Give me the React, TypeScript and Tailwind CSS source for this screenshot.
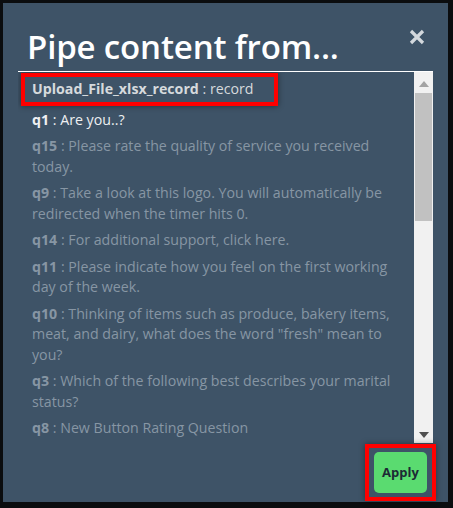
import React from "react";

const items: { k: string; v: string; bright?: boolean }[] = [
  { k: "q1", v: "Are you..?", bright: true },
  { k: "q15", v: "Please rate the quality of service you received today." },
  { k: "q9", v: "Take a look at this logo. You will automatically be redirected when the timer hits 0." },
  { k: "q14", v: "For additional support, click here." },
  { k: "q11", v: "Please indicate how you feel on the first working day of the week." },
  { k: "q10", v: 'Thinking of items such as produce, bakery items, meat, and dairy, what does the word "fresh" mean to you?' },
  { k: "q3", v: "Which of the following best describes your marital status?" },
  { k: "q8", v: "New Button Rating Question" },
];

export default function App() {
  return (
    <div
      className="w-[453px] h-[508px] bg-[#0b0d0f] pt-[3px] pl-[3px] overflow-hidden"
      style={{ fontFamily: '"Open Sans", "Noto Sans", sans-serif' }}
    >
      <div className="relative w-[445px] h-[499px] bg-[#3e5367] flex flex-col">
        <div className="flex items-start justify-between pl-[24px] pr-[22px] pt-[22px] h-[68px]">
          <h1 className="text-[33px] leading-[44px] font-semibold text-white tracking-[-0.15px]">
            Pipe content from...
          </h1>
          <svg width="18" height="18" viewBox="0 0 18 18" className="mt-[3px]">
            <path d="M3 3 L15 15 M15 3 L3 15" stroke="#d3d8dd" strokeWidth="3.2" strokeLinecap="butt" />
          </svg>
        </div>
        <div className="ml-[15px] w-[415px] h-[372px] border-t border-white flex">
          <div className="flex-1 overflow-hidden text-[14.2px] leading-[20.5px]">
            <div className="ml-[3px] mt-[1px] w-[257px] border-4 border-[#ff0000] px-[7px] py-[2px] shadow-[0_0_6px_rgba(0,0,0,0.45)]">
              <span className="font-bold text-[#d6dadd]">Upload_File_xlsx_record</span>
              <span className="text-[#d6dadd]"> : record</span>
            </div>
            <div className="pl-[14px] pr-[12px] mt-[4px] flex flex-col gap-[6px]">
              {items.map((it) => (
                <div
                  key={it.k}
                  className={it.bright ? "text-[#eef0f2]" : "text-[#8796a4]"}
                >
                  <span className="font-bold">{it.k}</span> : {it.v}
                </div>
              ))}
            </div>
          </div>
          <div className="w-[19px] bg-[#f1f1f1] flex flex-col items-center">
            <svg width="10" height="6" viewBox="0 0 10 6" className="mt-[9px]">
              <path d="M5 0 L10 6 L0 6 Z" fill="#a3a3a3" />
            </svg>
            <div className="mt-[6px] w-[17px] h-[128px] bg-[#c1c1c1]" />
            <div className="flex-1" />
            <svg width="10" height="6" viewBox="0 0 10 6" className="mb-[5px]">
              <path d="M0 0 L10 0 L5 6 Z" fill="#505050" />
            </svg>
          </div>
        </div>
        <div className="flex justify-end pr-[12px] mt-[1px]">
          <div className="border-4 border-[#ff0000] px-[5px] py-[4px] shadow-[0_0_6px_rgba(0,0,0,0.4)]">
            <button className="w-[53px] h-[41px] rounded-[5px] bg-[#5adb70] text-[#1d2a35] text-[13px] font-bold">
              Apply
            </button>
          </div>
        </div>
      </div>
    </div>
  );
}
